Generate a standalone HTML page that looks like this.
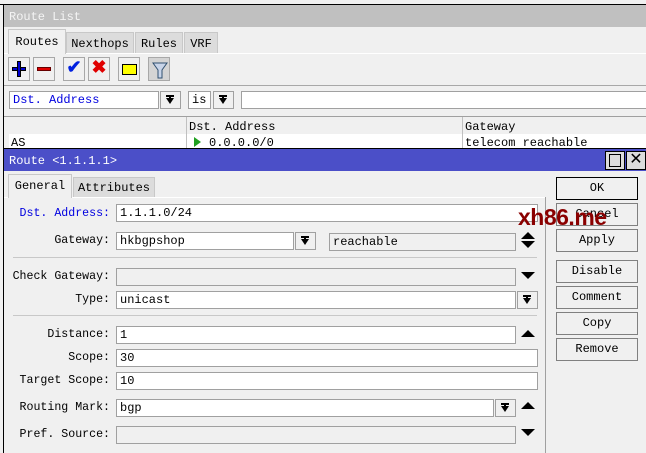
<!DOCTYPE html><html><head><style>
*{margin:0;padding:0;box-sizing:border-box}
body{width:646px;height:453px;overflow:hidden;background:#f0f0f0;position:relative;font-family:"Liberation Mono","Noto Sans CJK SC",monospace;font-size:12px;color:#000}
.a{position:absolute}
.f{position:absolute;background:#fff;border:1px solid #a0a0a0;height:18px;line-height:17px;padding-left:3px;white-space:nowrap;overflow:hidden}
.g{background:#f0f0f0}
.b{position:absolute;border:1px solid #808080;background:#f0f0f0;text-align:center;line-height:21px}
.t{position:absolute;border:1px solid #c8c8c8;border-bottom:none;background:#dcdcdc;text-align:center;line-height:23px}
.dd{position:absolute;width:21px;height:18px;border:1px solid #a0a0a0;background:#f0f0f0}
.dd:after{content:"";position:absolute;left:5px;top:3px;width:8px;height:2px;background:#000}
.dd:before{content:"";position:absolute;left:5px;top:6px;border-left:4px solid transparent;border-right:4px solid transparent;border-top:6px solid #000;border-bottom:0}
.dd i{position:absolute;left:8px;top:5px;width:2px;height:3px;background:#000}
.l{position:absolute;right:536px;text-align:right;white-space:nowrap;font-size:11.6px}
.up{position:absolute;width:0;height:0;border-left:7px solid transparent;border-right:7px solid transparent;border-bottom:7px solid #000}
.dn{position:absolute;width:0;height:0;border-left:7px solid transparent;border-right:7px solid transparent;border-top:7px solid #000}
.tb{position:absolute;top:57px;width:22px;height:24px;border:1px solid #a8a8a8;background:#f0f0f0}
</style></head><body>
<div class="a" style="left:0;top:4px;width:646px;height:1px;background:#000"></div>
<div class="a" style="left:3px;top:4px;width:1px;height:449px;background:#000"></div>
<div class="a" style="left:4px;top:5px;width:642px;height:22px;background:#c0c0c0;color:#f4f4f4;line-height:25px;padding-left:5px">Route List</div>
<div class="a" style="left:4px;top:53px;width:642px;height:1px;background:#fff"></div>
<div class="t" style="left:8px;top:29px;width:58px;height:25px;background:#f0f0f0;line-height:25px">Routes</div>
<div class="t" style="left:66px;top:32px;width:68px;height:21px;line-height:23px">Nexthops</div>
<div class="t" style="left:135px;top:32px;width:48px;height:21px;line-height:23px">Rules</div>
<div class="t" style="left:184px;top:32px;width:34px;height:21px;line-height:23px">VRF</div>
<div class="tb" style="left:8px"><div class="a" style="left:3px;top:9px;width:14px;height:4px;background:#0000d0;border:1px solid #000"></div><div class="a" style="left:8px;top:3px;width:4px;height:16px;background:#0000d0;border:1px solid #000"></div></div>
<div class="tb" style="left:33px"><div class="a" style="left:3px;top:9px;width:14px;height:4px;background:#e00000;border:1px solid #600"></div></div>
<div class="tb" style="left:63px;color:#0020e0;font-size:18px;line-height:22px;text-align:center;font-weight:bold">✔</div>
<div class="tb" style="left:88px;color:#e00000;font-size:18px;line-height:22px;text-align:center;font-weight:bold">✖</div>
<div class="tb" style="left:118px"><div class="a" style="left:3px;top:6px;width:15px;height:11px;background:#ff0;border:1px solid #000"></div></div>
<div class="tb" style="left:148px;background:#d4d4d4"><svg width="20" height="22" class="a" style="left:1px;top:1px"><path d="M3 4h14l-5 7v8h-4v-8z" fill="#c8d4e8" stroke="#305070"/></svg></div>
<div class="a" style="left:4px;top:85px;width:642px;height:1px;background:#a8a8a8"></div>
<div class="f" style="left:9px;top:91px;width:150px;color:#0000e0">Dst. Address</div>
<div class="dd" style="left:160px;top:91px"><i></i></div>
<div class="f" style="left:188px;top:91px;width:23px">is</div>
<div class="dd" style="left:213px;top:91px"><i></i></div>
<div class="f" style="left:241px;top:91px;width:406px"></div>
<div class="a" style="left:4px;top:116px;width:642px;height:1px;background:#a0a0a0"></div>
<div class="a" style="left:9px;top:117px;width:637px;height:18px;background:#f0f0f0;border-bottom:1px solid #fff"></div>
<div class="a" style="left:9px;top:135px;width:637px;height:14px;background:#fff"></div>
<div class="a" style="left:186px;top:117px;width:1px;height:32px;background:#c0c0c0"></div>
<div class="a" style="left:462px;top:117px;width:1px;height:32px;background:#c0c0c0"></div>
<div class="a" style="left:189px;top:120px">Dst. Address</div>
<div class="a" style="left:465px;top:120px">Gateway</div>
<div class="a" style="left:11px;top:136px">AS</div>
<div class="a" style="left:194px;top:137px;border-top:5px solid transparent;border-bottom:5px solid transparent;border-left:7px solid #20a020"></div>
<div class="a" style="left:209px;top:136px">0.0.0.0/0</div>
<div class="a" style="left:465px;top:136px">telecom reachable</div>
<div class="a" style="left:3px;top:148px;width:643px;height:1px;background:#000"></div>
<div class="a" style="left:4px;top:149px;width:642px;height:22px;background:#4b4fc8;color:#fff;line-height:25px;padding-left:5px">Route &lt;1.1.1.1&gt;</div>
<div class="a" style="left:605px;top:151px;width:20px;height:19px;border:1px solid #000;background:#dcdcdc"><div class="a" style="left:3px;top:2px;width:12px;height:13px;border:1px solid #000"></div></div>
<div class="a" style="left:626px;top:151px;width:20px;height:19px;border:1px solid #000;background:#dcdcdc;text-align:center;line-height:17px;font-size:16px">✕</div>
<div class="a" style="left:4px;top:197px;width:541px;height:1px;background:#fff"></div>
<div class="a" style="left:545px;top:197px;width:1px;height:256px;background:#a0a0a0"></div>
<div class="t" style="left:8px;top:174px;width:64px;height:24px;background:#f0f0f0">General</div>
<div class="t" style="left:73px;top:177px;width:82px;height:20px;line-height:21px">Attributes</div>
<div class="l" style="top:207px;color:#0000e0">Dst. Address:</div>
<div class="f" style="left:116px;top:204px;width:422px">1.1.1.0/24</div>
<div class="l" style="top:234px">Gateway:</div>
<div class="f" style="left:116px;top:232px;width:178px">hkbgpshop</div>
<div class="dd" style="left:295px;top:232px"><i></i></div>
<div class="f g" style="left:329px;top:233px;width:187px">reachable</div>
<div class="up" style="left:521px;top:232px"></div><div class="dn" style="left:521px;top:241px"></div>
<div class="a" style="left:13px;top:257px;width:524px;height:1px;background:#c8c8c8"></div>
<div class="l" style="top:270px">Check Gateway:</div>
<div class="f g" style="left:116px;top:268px;width:400px"></div>
<div class="dn" style="left:521px;top:272px"></div>
<div class="l" style="top:293px">Type:</div>
<div class="f" style="left:116px;top:291px;width:400px">unicast</div>
<div class="dd" style="left:517px;top:291px"><i></i></div>
<div class="a" style="left:13px;top:315px;width:524px;height:1px;background:#c8c8c8"></div>
<div class="l" style="top:328px">Distance:</div>
<div class="f" style="left:116px;top:326px;width:400px">1</div>
<div class="up" style="left:521px;top:330px"></div>
<div class="l" style="top:351px">Scope:</div>
<div class="f" style="left:116px;top:349px;width:422px">30</div>
<div class="l" style="top:374px">Target Scope:</div>
<div class="f" style="left:116px;top:372px;width:422px">10</div>
<div class="l" style="top:401px">Routing Mark:</div>
<div class="f" style="left:116px;top:399px;width:378px">bgp</div>
<div class="dd" style="left:495px;top:399px"><i></i></div>
<div class="up" style="left:521px;top:402px"></div>
<div class="l" style="top:428px">Pref. Source:</div>
<div class="f g" style="left:116px;top:426px;width:400px"></div>
<div class="dn" style="left:521px;top:429px"></div>
<div class="b" style="left:556px;top:177px;width:82px;height:23px;border:1px solid #000">OK</div>
<div class="b" style="left:556px;top:203px;width:82px;height:23px">Cancel</div>
<div class="b" style="left:556px;top:229px;width:82px;height:23px">Apply</div>
<div class="b" style="left:556px;top:260px;width:82px;height:23px">Disable</div>
<div class="b" style="left:556px;top:286px;width:82px;height:23px">Comment</div>
<div class="b" style="left:556px;top:312px;width:82px;height:23px">Copy</div>
<div class="b" style="left:556px;top:338px;width:82px;height:23px">Remove</div>
<div class="a" style="left:518px;top:204px;color:#8a0000;font-family:'Liberation Sans',sans-serif;font-weight:bold;font-size:23px;letter-spacing:-0.5px">xh86.me</div>
</body></html>
